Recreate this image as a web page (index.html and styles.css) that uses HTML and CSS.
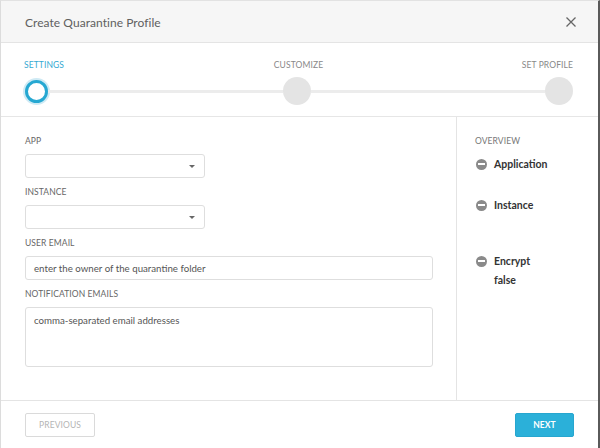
FILE: index.html
```html
<!DOCTYPE html>
<html>
<head>
<meta charset="utf-8">
<link rel="stylesheet" href="styles.css">
</head>
<body>
<div class="modal">
  <div class="header">
    <div class="title">Create Quarantine Profile</div>
    <svg class="close" width="12" height="12" viewBox="0 0 12 12"><path d="M1.5 1.5L10.5 10.5M10.5 1.5L1.5 10.5" stroke="#666" stroke-width="1.3" fill="none"/></svg>
  </div>
  <div class="stepper">
    <div class="labels">
      <span class="lab active">SETTINGS</span>
      <span class="lab mid">CUSTOMIZE</span>
      <span class="lab end">SET PROFILE</span>
    </div>
    <div class="track">
      <span class="dot current"></span>
      <span class="line"></span>
      <span class="dot"></span>
      <span class="line"></span>
      <span class="dot"></span>
    </div>
  </div>
  <div class="body">
    <div class="form">
      <div class="group">
        <div class="flabel">APP</div>
        <div class="select short"><span class="caret"></span></div>
      </div>
      <div class="group">
        <div class="flabel">INSTANCE</div>
        <div class="select short"><span class="caret"></span></div>
      </div>
      <div class="group">
        <div class="flabel">USER EMAIL</div>
        <div class="input">enter the owner of the quarantine folder</div>
      </div>
      <div class="group">
        <div class="flabel">NOTIFICATION EMAILS</div>
        <div class="input area">comma-separated email addresses</div>
      </div>
    </div>
    <div class="overview">
      <div class="otitle">OVERVIEW</div>
      <div class="item i1"><span class="minus"></span><span>Application</span></div>
      <div class="item i2"><span class="minus"></span><span>Instance</span></div>
      <div class="item i3"><span class="minus"></span><span>Encrypt</span></div>
      <div class="val">false</div>
    </div>
  </div>
  <div class="footer">
    <button class="btn prev">PREVIOUS</button>
    <button class="btn next">NEXT</button>
  </div>
</div>
</body>
</html>
```
FILE: styles.css
```css
* { box-sizing: border-box; }
html, body { margin: 0; padding: 0; background: #fff; }
body { font-family: Lato, "Open Sans", "Liberation Sans", sans-serif; color: #555; }
.modal {
  width: 600px; height: 448px;
  border-left: 1px solid #dcdcdc;
  border-top: 1px solid #e2e2e2;
  border-right: 2px solid #5a5a5a;
  display: flex; flex-direction: column;
  overflow: hidden;
}
.header {
  height: 42px; flex: none;
  background: #f6f6f6;
  border-bottom: 1px solid #e4e4e4;
  display: flex; align-items: center; justify-content: space-between;
  padding: 1px 21px 0 24px;
}
.title { font-size: 12px; color: #606060; letter-spacing: 0.05px; }
.close { display: block; }
.stepper {
  height: 74px; flex: none;
  border-bottom: 1px solid #e6e6e6;
  padding: 16px 25px 0 23px;
}
.labels { display: grid; grid-template-columns: 1fr auto 1fr; height: 12px; font-size: 8.5px; line-height: 12px; color: #888; }
.lab { letter-spacing: 0.1px; }
.lab.end { justify-self: end; }
.lab.active { color: #34a9d2; }
.track { display: flex; align-items: center; margin-top: 6px; height: 28px; padding-left: 1px; }
.dot { width: 28px; height: 28px; border-radius: 50%; background: #e4e4e4; flex: none; }
.dot.current { width: 23px; height: 23px; background: #fff; border: 3px solid #26a8d2; box-shadow: 0 0 0 2px #cfeaf4; }
.line { flex: 1; height: 3px; background: #ececec; }
.body { flex: none; height: 284px; display: flex; border-bottom: 1px solid #e4e4e4; }
.form { width: 456px; border-right: 1px solid #e4e4e4; padding: 19px 24px 0 24px; }
.group { margin-bottom: 9px; }
.flabel { font-size: 8.5px; line-height: 11px; color: #666; margin-bottom: 7px; letter-spacing: 0.1px; }
.select {
  height: 24px; border: 1px solid #dedede; border-radius: 3px; position: relative;
  display: flex; align-items: center; justify-content: flex-end; padding-right: 9px;
}
.select.short { width: 180px; }
.caret { width: 0; height: 0; border-left: 3px solid transparent; border-right: 3px solid transparent; border-top: 3px solid #666; }
.input {
  width: 408px; height: 24px; border: 1px solid #dedede; border-radius: 3px;
  font-size: 9.7px; color: #555; padding: 0 0 0 8px; line-height: 22px;
}
.input.area { height: 60px; line-height: 14px; padding-top: 5px; }
.overview { flex: 1; padding: 19px 0 0 18px; }
.otitle { font-size: 8.5px; line-height: 11px; color: #777; letter-spacing: 0.1px; }
.item { display: flex; align-items: center; font-size: 10.5px; font-weight: bold; color: #333; height: 14px; }
.item.i1 { margin-top: 10px; }
.item.i2 { margin-top: 27px; }
.item.i3 { margin-top: 42px; }
.minus { width: 11px; height: 11px; border-radius: 50%; background: #8a8a8a; margin: 0 7px 0 1px; position: relative; flex: none; }
.minus::after { content: ""; position: absolute; left: 2px; right: 2px; top: 4.5px; height: 2px; background: #fff; }
.val { font-size: 10.5px; font-weight: bold; color: #333; margin: 5px 0 0 19px; line-height: 14px; }
.footer { flex: 1; display: flex; justify-content: space-between; align-items: flex-start; padding: 12px 24px 0 24px; }
.btn { font-family: inherit; height: 24px; font-size: 8.5px; border-radius: 2px; cursor: pointer; letter-spacing: 0.1px; }
.btn.prev { width: 70px; background: #fff; border: 1px solid #dadada; color: #b5b5b5; }
.btn.next { width: 59px; background: #2bb0d9; border: 1px solid #27a6cf; color: #fff; font-weight: bold; }
```
